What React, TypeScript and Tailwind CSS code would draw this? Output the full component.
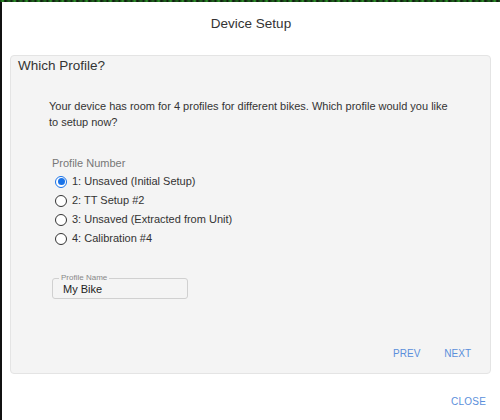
import { useState } from "react";

const profiles = [
  "1: Unsaved (Initial Setup)",
  "2: TT Setup #2",
  "3: Unsaved (Extracted from Unit)",
  "4: Calibration #4",
];

function Radio({ checked }: { checked: boolean }) {
  return checked ? (
    <span className="flex h-[12px] w-[12px] items-center justify-center rounded-full border border-[#1a73e8] bg-white">
      <span className="h-[7px] w-[7px] rounded-full bg-[#1a73e8]" />
    </span>
  ) : (
    <span className="h-[12px] w-[12px] rounded-full border border-[#333] bg-white" />
  );
}

export default function App() {
  const [selected, setSelected] = useState(0);
  const [name, setName] = useState("My Bike");

  return (
    <div className="relative h-[420px] w-[500px] overflow-hidden bg-[#141414] font-['Liberation_Sans',Arial,sans-serif] text-[#333]">
      {/* chart remnants behind the dialog */}
      <div className="h-[2px] w-full bg-[repeating-linear-gradient(90deg,#0f3d12_0px,#2e9a2a_3px,#111_5px,#1d6b1c_9px,#111_12px)]" />
      <div className="flex">
        <div className="w-[2px] shrink-0 bg-[#111]" />
        {/* Dialog */}
        <div className="flex h-[420px] w-[498px] flex-col bg-white">
          <div className="flex h-[43px] items-center justify-center pt-[1px] text-[13.5px] text-[#333]">
            Device Setup
          </div>

          {/* Card */}
          <div className="ml-[8px] mt-[10px] flex h-[319px] w-[481px] flex-col rounded-[4px] border border-[#e4e4e4] bg-[#f4f4f4]">
            <div className="ml-[7px] mt-[0px] h-[20px] text-[13.5px] leading-[20px] text-[#333]">Which Profile?</div>

            <p className="ml-[38px] mt-[22px] w-[405px] text-[11px] leading-[16px] text-[#333]">
              Your device has room for 4 profiles for different bikes. Which profile would you like to setup now?
            </p>

            <div className="ml-[41px] mt-[25px] text-[11px] leading-[16px] text-[#777]">Profile Number</div>

            <div className="ml-[44px] mt-[1px] flex flex-col">
              {profiles.map((p, i) => (
                <label
                  key={p}
                  className="flex h-[19px] cursor-pointer items-center gap-[5px] text-[11px] text-[#333]"
                  onClick={() => setSelected(i)}
                >
                  <Radio checked={selected === i} />
                  <span>{p}</span>
                </label>
              ))}
            </div>

            <div className="relative ml-[41px] mt-[30px] flex h-[21px] w-[136px] items-center rounded-[3px] border border-[#d0d0d0]">
              <span className="absolute -top-[6px] left-[6px] bg-[#f4f4f4] px-[2px] text-[8px] leading-[10px] text-[#888]">
                Profile Name
              </span>
              <input
                value={name}
                onChange={(e) => setName(e.target.value)}
                className="w-full bg-transparent pl-[10px] text-[11px] leading-[16px] text-[#222] outline-none"
              />
            </div>

            <div className="mr-[19px] mt-auto mb-[12px] flex justify-end gap-[24px] text-[10px] text-[#5b8fdb]">
              <button className="uppercase">Prev</button>
              <button className="uppercase">Next</button>
            </div>
          </div>

          <div className="mr-[14px] mt-[20px] flex justify-end text-[10px] tracking-[0.2px] text-[#5b8fdb]">
            <button className="uppercase">Close</button>
          </div>
        </div>
      </div>
    </div>
  );
}
